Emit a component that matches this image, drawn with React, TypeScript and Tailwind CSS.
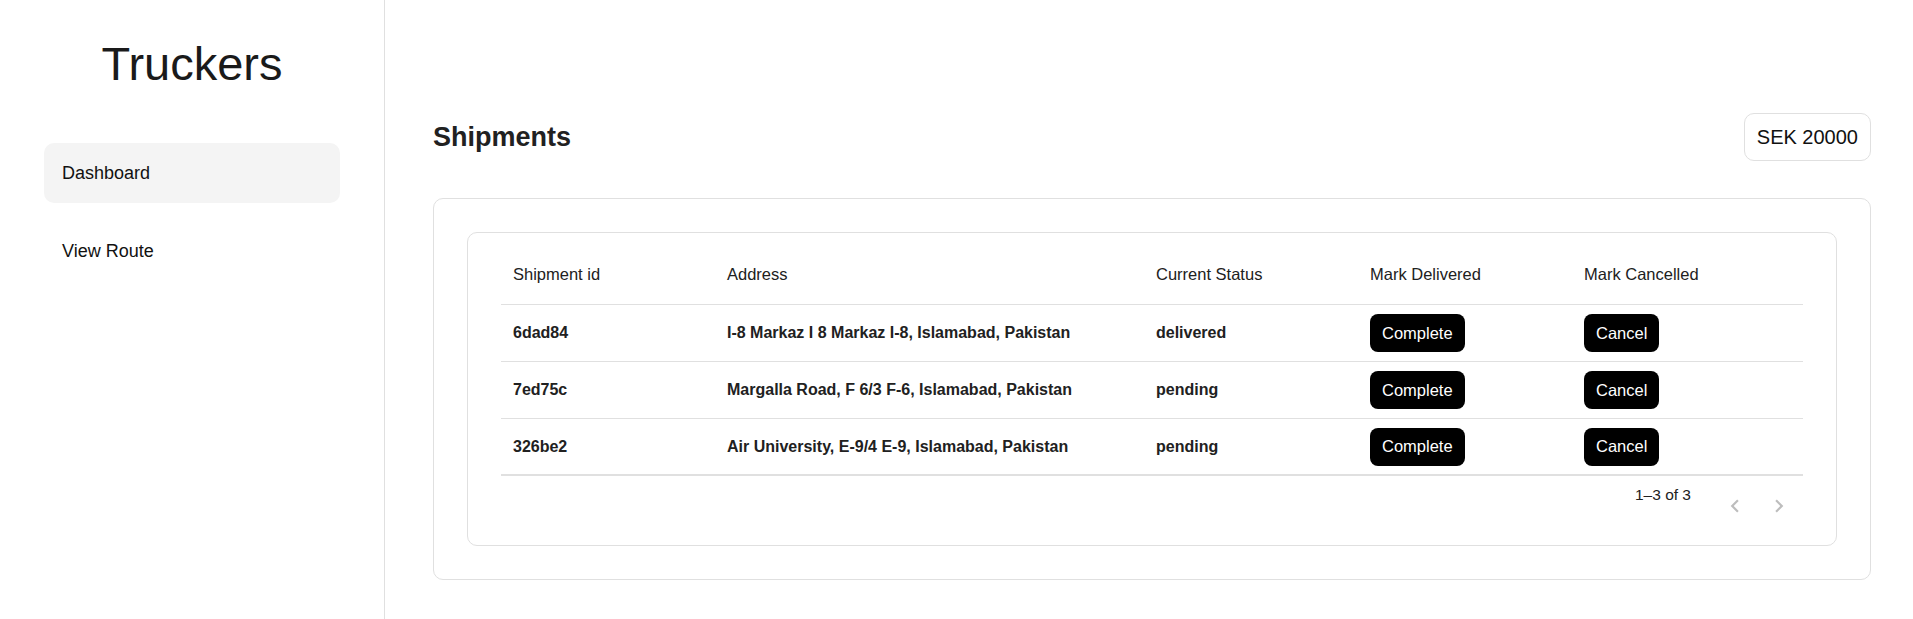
import React from 'react';

const shipments = [
  { id: '6dad84', address: 'I-8 Markaz I 8 Markaz I-8, Islamabad, Pakistan', status: 'delivered' },
  { id: '7ed75c', address: 'Margalla Road, F 6/3 F-6, Islamabad, Pakistan', status: 'pending' },
  { id: '326be2', address: 'Air University, E-9/4 E-9, Islamabad, Pakistan', status: 'pending' },
];

const cols = 'grid grid-cols-[214px_429px_214px_214px_1fr] items-center';

const ArrowLeft = () => (
  <svg viewBox="0 0 24 24" className="w-[26px] h-[26px] fill-[#bdbdbd]">
    <path d="M15.41 16.59 10.83 12l4.58-4.59L14 6l-6 6 6 6z" />
  </svg>
);

const ArrowRight = () => (
  <svg viewBox="0 0 24 24" className="w-[26px] h-[26px] fill-[#bdbdbd]">
    <path d="M8.59 16.59 13.17 12 8.59 7.41 10 6l6 6-6 6z" />
  </svg>
);

const Sidebar = () => (
  <aside className="w-[385px] shrink-0 border-r border-[#e0e0e0] px-[44px]">
    <h1 className="pt-[40px] text-center text-[47px] leading-none text-[#1a1a1a]">Truckers</h1>
    <nav className="mt-[56px] flex flex-col gap-[18px]">
      <a className="h-[60px] flex items-center px-[18px] rounded-[10px] bg-[#f4f4f4] text-[18px] text-[#111]">
        Dashboard
      </a>
      <a className="h-[60px] flex items-center px-[18px] rounded-[10px] text-[18px] text-[#111]">
        View Route
      </a>
    </nav>
  </aside>
);

const ShipmentsTable = () => (
  <div className="border border-[#e0e0e0] rounded-[10px] px-[33px] pt-[11px]">
    <div className={`${cols} h-[61px] border-b border-[#e0e0e0] text-[16.5px] text-[#212121]`}>
      <div className="px-[12px]">Shipment id</div>
      <div className="px-[12px]">Address</div>
      <div className="px-[12px]">Current Status</div>
      <div className="px-[12px]">Mark Delivered</div>
      <div className="px-[12px]">Mark Cancelled</div>
    </div>
    {shipments.map((s, i) => (
      <div
        key={s.id}
        className={`${cols} h-[57px] border-[#e0e0e0] text-[16px] font-bold text-[#212121] ${
          i === shipments.length - 1 ? 'border-b-2' : 'border-b'
        }`}
      >
        <div className="px-[12px]">{s.id}</div>
        <div className="px-[12px]">{s.address}</div>
        <div className="px-[12px]">{s.status}</div>
        <div className="px-[12px]">
          <button className="h-[38px] px-[12px] rounded-[8px] bg-black text-white text-[16.5px] font-normal">
            Complete
          </button>
        </div>
        <div className="px-[12px]">
          <button className="h-[38px] px-[12px] rounded-[8px] bg-black text-white text-[16.5px] font-normal">
            Cancel
          </button>
        </div>
      </div>
    ))}
    <div className="h-[69px] flex justify-end pr-[4px]">
      <span className="mt-[10px] text-[15.5px] leading-[17px] text-[#212121]">1–3 of 3</span>
      <div className="ml-[24px] mt-[10px] flex gap-[4px]">
        <button className="w-10 h-10 flex items-center justify-center">
          <ArrowLeft />
        </button>
        <button className="w-10 h-10 flex items-center justify-center">
          <ArrowRight />
        </button>
      </div>
    </div>
  </div>
);

export default function App() {
  return (
    <div className="flex min-h-[619px] bg-white font-['Liberation_Sans',Arial,sans-serif]">
      <Sidebar />
      <main className="flex-1 pl-[48px] pr-[42px] pt-[113px]">
        <div className="flex items-center justify-between">
          <h2 className="text-[27px] font-bold text-[#212121]">Shipments</h2>
          <div className="h-[48px] px-[12px] flex items-center border border-[#e0e0e0] rounded-[10px] text-[20px] text-[#111]">
            SEK 20000
          </div>
        </div>
        <div className="mt-[37px] border border-[#e0e0e0] rounded-[10px] p-[33px]">
          <ShipmentsTable />
        </div>
      </main>
    </div>
  );
}
